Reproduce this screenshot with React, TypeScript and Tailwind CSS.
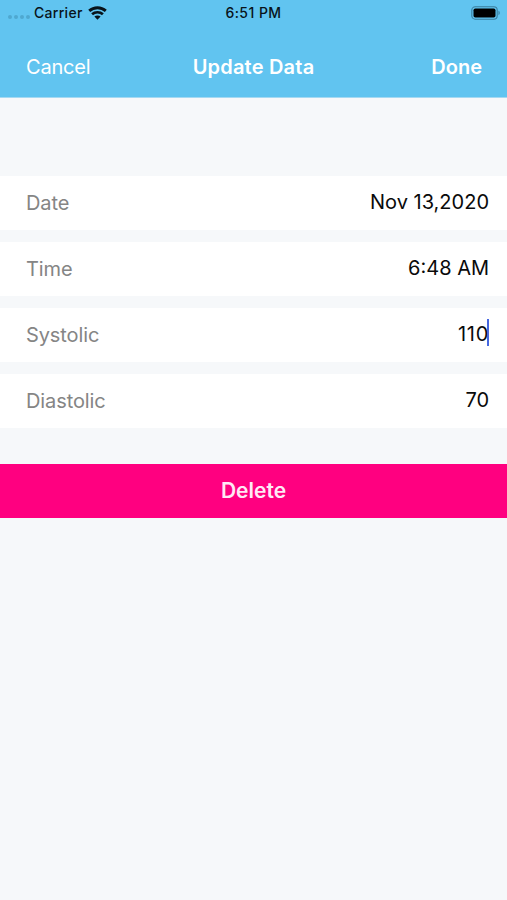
import clsx from 'clsx';

type Reading = {
  label: string;
  value: string;
  focused?: boolean;
};

const readings: Reading[] = [
  { label: 'Date', value: 'Nov 13,2020' },
  { label: 'Time', value: '6:48 AM' },
  { label: 'Systolic', value: '110', focused: true },
  { label: 'Diastolic', value: '70' },
];

function StatusBar() {
  return (
    <div className="grid h-[26px] grid-cols-3 items-center text-[14px] font-medium text-[#08131a]">
      <div className="flex items-center pl-2">
        <div className="flex gap-[2px] pt-[8px]">
          {[0, 1, 2, 3].map((dot) => (
            <span key={dot} className="h-[4px] w-[4px] rounded-full bg-[#4fa8d0]" />
          ))}
        </div>
        <span className="ml-[4px] pb-[2px] tracking-[0.3px]">Carrier</span>
        <svg className="ml-[5px]" width="19" height="14" viewBox="0 0 19 14" fill="none">
          <path d="M1.2 4.9C5.9.7 13.1.7 17.8 4.9" stroke="#08131a" strokeWidth="2.9" />
          <path d="M4.1 8.3c2.9-2.8 7.9-2.8 10.8 0" stroke="#08131a" strokeWidth="2.6" />
          <path d="M9.5 13.8 6.4 10.6c1.6-1.6 4.6-1.6 6.2 0z" fill="#08131a" />
        </svg>
      </div>
      <span className="pb-[2px] text-center tracking-[0.45px]">6:51 PM</span>
      <div className="flex justify-end pr-[6px]">
        <svg width="30" height="14" viewBox="0 0 30 14" fill="none">
          <rect x="0.8" y="0.8" width="25.4" height="12.4" rx="3.4" stroke="#397d9d" strokeWidth="1.1" />
          <rect x="2.5" y="2.5" width="22" height="9" rx="1.8" fill="#000" />
          <path d="M27.5 4.8c1.6.6 1.6 3.8 0 4.4z" fill="#397d9d" />
        </svg>
      </div>
    </div>
  );
}

function NavBar() {
  return (
    <div className="grid h-[71px] grid-cols-3 items-center pt-[11px] text-[20px] text-white">
      <button className="pl-[26px] text-left tracking-[-0.2px]">Cancel</button>
      <h1 className="text-center font-semibold tracking-[0.2px]">Update Data</h1>
      <button className="pr-[25px] text-right font-semibold">Done</button>
    </div>
  );
}

function Row({ label, value, focused }: Reading) {
  return (
    <div className="flex h-[54px] items-center justify-between bg-white pl-[26px] pr-[18px] text-[20px]">
      <span className="tracking-[-0.1px] text-[#858585]">{label}</span>
      <span className={clsx('relative pb-[2px] text-[#0a0a0a]', focused && 'tracking-[0.7px]')}>
        {value}
        {focused && <span className="absolute right-0 top-0 h-[27px] w-[2px] bg-[#4668e0]" />}
      </span>
    </div>
  );
}

export default function App() {
  return (
    <div className="min-h-screen bg-[#f6f8fa] font-['Inter','Liberation_Sans',sans-serif]">
      <header className="h-[98px] border-b border-[#a5d9f2] bg-[#61c4f0]">
        <StatusBar />
        <NavBar />
      </header>

      <main className="pt-[78px]">
        <div className="flex flex-col gap-3">
          {readings.map((reading) => (
            <Row key={reading.label} {...reading} />
          ))}
        </div>

        <button className="mt-9 h-[54px] w-full bg-[#ff0080] text-[21px] font-semibold text-[#ffe9f5]">Delete</button>
      </main>
    </div>
  );
}
